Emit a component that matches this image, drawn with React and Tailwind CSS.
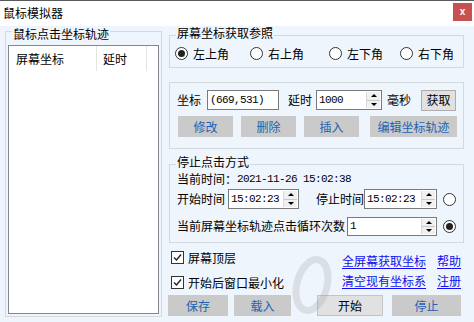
import React from 'react';

function Radio({ checked }) {
  return (
    <span className="w-[13px] h-[13px] shrink-0 rounded-full border border-[#333333] bg-white flex items-center justify-center">
      {checked && <span className="w-[7px] h-[7px] rounded-full bg-[#222222]" />}
    </span>
  );
}

function Check() {
  return (
    <span className="w-[13px] h-[13px] shrink-0 border border-[#333333] bg-white flex items-center justify-center">
      <svg width="9" height="9" viewBox="0 0 9 9">
        <path d="M1 4.5 L3.5 7 L8 1.5" fill="none" stroke="#222" strokeWidth="1.4" />
      </svg>
    </span>
  );
}

function Spin() {
  return (
    <div className="w-[14px] h-full flex flex-col border-l border-[#d9d9d9] bg-[#f0f0f0]">
      <div className="flex-1 flex items-center justify-center border-b border-[#c8c8c8]">
        <span className="w-0 h-0 border-x-[3px] border-x-transparent border-b-[3px] border-b-black" />
      </div>
      <div className="flex-1 flex items-center justify-center">
        <span className="w-0 h-0 border-x-[3px] border-x-transparent border-t-[3px] border-t-black" />
      </div>
    </div>
  );
}

function NumBox({ value, className }) {
  return (
    <div className={`flex bg-white border border-[#7a7a7a] p-[1px] ${className}`}>
      <span className="flex-1 flex items-center pl-[1px] font-['Liberation_Mono',monospace] text-[11px] tracking-[-0.6px]">{value}</span>
      <Spin />
    </div>
  );
}

function Btn({ children, className }) {
  return (
    <div className={`h-[21px] bg-[#cacaca] text-[#1d62b3] flex items-center justify-center ${className}`}>{children}</div>
  );
}

export default function App() {
  return (
    <div className="relative w-[474px] h-[322px] overflow-hidden bg-[#eef5fc] text-[12px] leading-none text-black font-['Noto_Sans_CJK_SC',sans-serif]">
      {/* title bar */}
      <div className="h-[26px] bg-white border-t border-[#5a5a5a] flex items-start justify-between">
        <span className="pl-[3px] pt-[6px]">鼠标模拟器</span>
        <div className="mt-[2px] mr-[2px] w-[19px] h-[18px] bg-[#c75050] flex items-center justify-center text-white text-[10px] font-bold font-['Liberation_Sans',sans-serif]">x</div>
      </div>

      <div className="flex h-[296px]">
        {/* left list */}
        <div className="relative ml-[5px] mt-[5px] w-[157px] h-[286px] border border-[#d4d9de] pt-[13px] px-[2px] pb-[2px]">
          <span className="absolute left-[6px] -top-[4px] bg-[#eef5fc] px-[1px]">鼠标点击坐标轨迹</span>
          <div className="h-full border border-[#828790] bg-white">
            <div className="flex h-[25px]">
              <div className="w-[88px] border-r border-[#e5e5e5] pl-[7px] flex items-center">屏幕坐标</div>
              <div className="w-[50px] border-r border-[#e5e5e5] pl-[6px] flex items-center">延时</div>
            </div>
          </div>
        </div>

        {/* right side */}
        <div className="ml-[7px] w-[295px] flex flex-col">
          <div className="relative mt-[9px] h-[33px] border border-[#d4d9de] pl-[5px] pt-[4px] flex items-center">
            <span className="absolute left-[6px] -top-[9px] bg-[#eef5fc] px-[1px]">屏幕坐标获取参照</span>
            <div className="w-[75px] flex items-center gap-[5px]"><Radio checked />左上角</div>
            <div className="w-[79px] flex items-center gap-[5px]"><Radio />右上角</div>
            <div className="w-[71px] flex items-center gap-[5px]"><Radio />左下角</div>
            <div className="flex items-center gap-[5px]"><Radio />右下角</div>
          </div>

          <div className="mt-[14px] h-[67px] border border-[#d4d9de] pl-[7px] pt-[6px]">
            <div className="flex items-center h-[22px]">
              <span>坐标</span>
              <div className="ml-[6px] w-[72px] h-[20px] bg-white border border-[#7a7a7a] pl-[2px] flex items-center font-['Liberation_Mono',monospace] text-[11px] tracking-[-0.6px]">(669,531)</div>
              <span className="ml-[9px]">延时</span>
              <NumBox value="1000" className="ml-[4px] w-[66px] h-[20px]" />
              <span className="ml-[5px]">毫秒</span>
              <div className="ml-[10px] w-[35px] h-[21px] bg-[#e1e1e1] border border-[#adadad] flex items-center justify-center">获取</div>
            </div>
            <div className="flex mt-[5px] ml-[1px]">
              <Btn className="w-[55px]">修改</Btn>
              <Btn className="w-[55px] ml-[8px]">删除</Btn>
              <Btn className="w-[55px] ml-[8px]">插入</Btn>
              <Btn className="w-[87px] ml-[11px]">编辑坐标轨迹</Btn>
            </div>
          </div>

          <div className="relative mt-[15px] h-[79px] border border-[#d4d9de] pl-[7px] pt-[8px]">
            <span className="absolute left-[6px] -top-[9px] bg-[#eef5fc] px-[1px]">停止点击方式</span>
            <div className="flex items-center h-[12px]">
              <span>当前时间：</span>
              <span className="font-['Liberation_Mono',monospace] text-[11px] tracking-[-0.6px]">2021-11-26 15:02:38</span>
            </div>
            <div className="flex items-center h-[20px] mt-[4px]">
              <span>开始时间</span>
              <NumBox value="15:02:23" className="ml-[3px] w-[71px] h-[20px]" />
              <span className="ml-[17px]">停止时间</span>
              <NumBox value="15:02:23" className="w-[73px] h-[20px]" />
              <span className="ml-[6px]"><Radio /></span>
            </div>
            <div className="flex items-center h-[20px] mt-[7px]">
              <span>当前屏幕坐标轨迹点击循环次数</span>
              <NumBox value="1" className="ml-[2px] w-[90px] h-[19px]" />
              <span className="ml-[6px]"><Radio checked /></span>
            </div>
          </div>

          <div className="flex h-[52px]">
            <div className="w-[173px] pl-[2px] pt-[8px] flex flex-col gap-[12px]">
              <div className="flex items-center h-[13px] gap-[4px]"><Check />屏幕顶层</div>
              <div className="flex items-center h-[13px] gap-[4px]"><Check />开始后窗口最小化</div>
            </div>
            <div className="pt-[12px] flex flex-col gap-[8px] text-[#1010f0] underline underline-offset-2">
              <div className="flex"><span className="w-[84px]">全屏幕获取坐标</span><span className="ml-[11px]">帮助</span></div>
              <div className="flex"><span className="w-[84px]">清空现有坐标系</span><span className="ml-[11px]">注册</span></div>
            </div>
          </div>

          <div className="flex -ml-[1px]">
            <Btn className="w-[60px]">保存</Btn>
            <Btn className="w-[57px] ml-[6px]">载入</Btn>
            <div className="w-[66px] ml-[26px] h-[21px] bg-[#e1e1e1] border border-[#c4c4c4] flex items-center justify-center">开始</div>
            <Btn className="w-[69px] ml-[9px]">停止</Btn>
          </div>
        </div>
      </div>

      {/* faint watermark ring */}
      <svg className="pointer-events-none absolute left-[290px] top-[252px] opacity-20" width="44" height="66" viewBox="0 0 44 66">
        <ellipse cx="22" cy="33" rx="15" ry="26" fill="none" stroke="#8a8a8a" strokeWidth="7" transform="rotate(15 22 33)" />
      </svg>
    </div>
  );
}
